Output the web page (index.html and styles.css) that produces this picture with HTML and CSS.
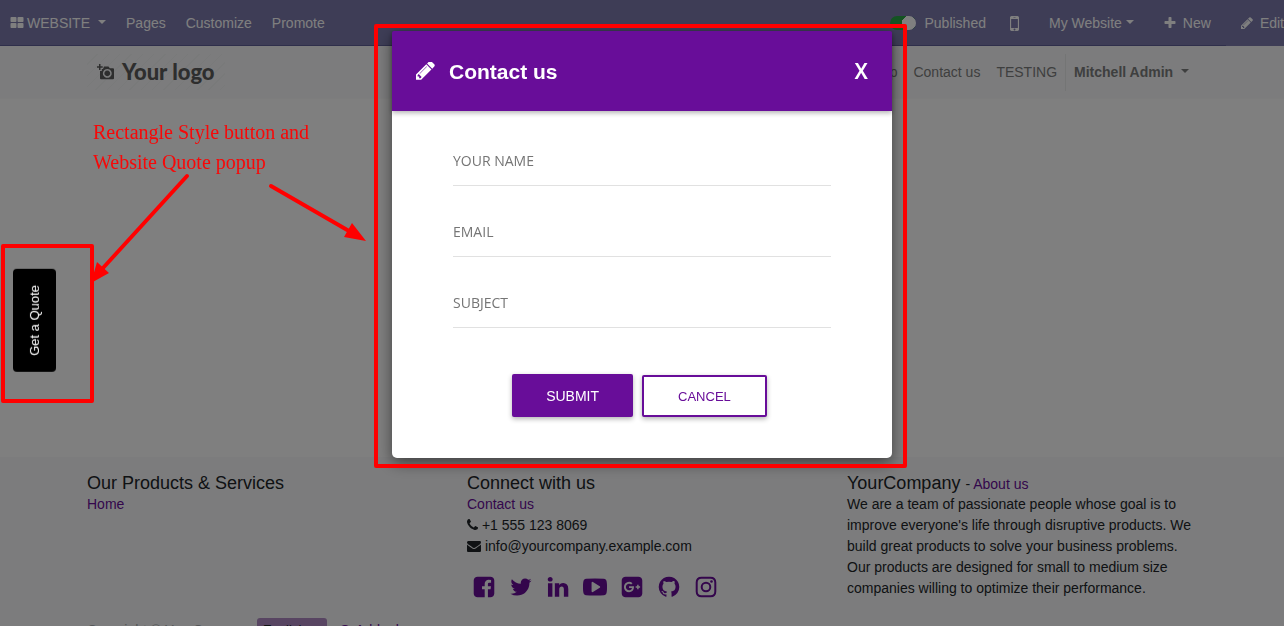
FILE: index.html
```html
<!DOCTYPE html>
<html lang="en">
<head>
    <meta charset="UTF-8">
    <meta name="viewport" content="width=device-width, initial-scale=1.0">
    <title>Contact us</title>
    <link rel="stylesheet" href="styles.css">
</head>
<body>
    <div class="page">
        <nav class="topbar">
            <a href="#" class="brand">
                <svg class="icon" viewBox="0 0 1792 1792"><path d="M832 1024v384q0 52-38 90t-90 38h-512q-52 0-90-38t-38-90v-384q0-52 38-90t90-38h512q52 0 90 38t38 90zm0-768v384q0 52-38 90t-90 38h-512q-52 0-90-38t-38-90v-384q0-52 38-90t90-38h512q52 0 90 38t38 90zm896 768v384q0 52-38 90t-90 38h-512q-52 0-90-38t-38-90v-384q0-52 38-90t90-38h512q52 0 90 38t38 90zm0-768v384q0 52-38 90t-90 38h-512q-52 0-90-38t-38-90v-384q0-52 38-90t90-38h512q52 0 90 38t38 90z"/></svg>
                WEBSITE <span class="caret"></span>
            </a>
            <a href="#">Pages</a>
            <a href="#">Customize</a>
            <a href="#">Promote</a>
            <div class="topbar-right">
                <label class="publish"><input type="checkbox" class="switch" checked> Published</label>
                <a href="#" class="mobile" aria-label="Mobile preview">
                    <svg viewBox="512 256 768 1280"><path d="M976 1408q0-33-23.500-56.500t-56.500-23.500-56.500 23.500-23.500 56.500 23.500 56.500 56.500 23.500 56.500-23.500 23.500-56.500zm208-160v-704q0-13-9.500-22.500t-22.500-9.500h-512q-13 0-22.500 9.500t-9.500 22.500v704q0 13 9.500 22.500t22.500 9.500h512q13 0 22.500-9.500t9.500-22.500zm-192-848q0-16-16-16h-160q-16 0-16 16t16 16h160q16 0 16-16zm288-16v1024q0 52-38 90t-90 38h-512q-52 0-90-38t-38-90v-1024q0-52 38-90t90-38h512q52 0 90 38t38 90z"/></svg>
                </a>
                <a href="#">My Website<span class="caret caret-tight"></span></a>
                <a href="#" class="action">
                    <svg class="icon" viewBox="0 0 1792 1792"><path d="M1600 736v192q0 40-28 68t-68 28h-416v416q0 40-28 68t-68 28h-192q-40 0-68-28t-28-68v-416h-416q-40 0-68-28t-28-68v-192q0-40 28-68t68-28h416v-416q0-40 28-68t68-28h192q40 0 68 28t28 68v416h416q40 0 68 28t28 68z"/></svg>
                    New
                </a>
                <a href="#" class="action edit">
                    <svg class="icon" viewBox="0 0 1792 1792"><path d="M491 1536l91-91-235-235-91 91v107h128v128h107zm523-928q0-22-22-22-10 0-17 7l-542 542q-7 7-7 17 0 22 22 22 10 0 17-7l542-542q7-7 7-17zm-54-192l416 416-832 832h-416v-416zm683 96q0 53-37 90l-166 166-416-416 166-165q36-38 90-38 53 0 91 38l235 234q37 39 37 91z"/></svg>
                    Edit
                </a>
            </div>
        </nav>

        <header class="site-header">
            <div class="container header-row">
                <a href="#" class="logo">
                    <svg viewBox="0 0 18 16"><path fill-rule="evenodd" d="M2 0h1.500v2.200h2.200v1.500h-2.200v2.200h-1.500v-2.200h-2v-1.500h2zM7 2.500h4.500l1.300 1.700h3.200q1 0 1 1v9q0 1-1 1h-12q-1 0-1-1v-7.200h1.800v-2h1.200zM10.300 5a4.400 4.400 0 1 0 .010 0zM10.300 6.500a2.900 2.900 0 1 1-.010 0z"/></svg>
                    <span>Your logo</span>
                </a>
                <nav class="menu">
                    <a href="#">Shop</a>
                    <a href="#">Contact us</a>
                    <a href="#">TESTING</a>
                    <a href="#" class="user">Mitchell Admin <span class="caret"></span></a>
                </nav>
            </div>
        </header>

        <main class="content"></main>

        <footer class="site-footer">
            <div class="container columns">
                <section>
                    <h5>Our Products &amp; Services</h5>
                    <a href="#">Home</a>
                </section>
                <section>
                    <h5>Connect with us</h5>
                    <a href="#">Contact us</a>
                    <p>
                        <svg class="phone" viewBox="192 0 1408 1792"><path d="M1600 1240q0 27-10 70.500t-21 68.500q-21 50-122 106-94 51-186 51-27 0-53-3.500t-57.500-12.500-47-14.500-55.500-20.500-49-18q-98-35-175-83-127-79-264-216t-216-264q-48-77-83-175-3-9-18-49t-20.500-55.500-14.500-47-12.500-57.500-3.500-53q0-92 51-186 56-101 106-122 25-11 68.500-21t70.500-10q14 0 21 3 18 6 53 76 11 19 30 54t35 63.500 31 53.500q3 4 17.500 25t21.500 35.500 7 28.500q0 20-28.500 50t-62 55-62 53-28.500 46q0 9 5 22.500t8.500 20.500 14 24 11.500 19q76 137 174 235t235 174q2 1 19 11.500t24 14 20.500 8.500 22.500 5q18 0 46-28.500t53-62 55-62 50-28.500q14 0 28.500 7t35.500 21.500 25 17.500q25 15 53.500 31t63.500 35 54 30q70 35 76 53 3 7 3 21z"/></svg>
                        +1 555 123 8069
                    </p>
                    <p>
                        <svg class="envelope" viewBox="0 0 1792 1792"><path d="M1792 710v794q0 66-47 113t-113 47h-1472q-66 0-113-47t-47-113v-794q44 49 101 87 362 246 497 345 57 42 92.500 65.500t94.500 48 110 24.500h2q51 0 110-24.500t94.500-48 92.500-65.500q170-123 498-345 57-39 100-87zm0-294q0 79-49 151t-122 123q-376 261-468 325-10 7-42.500 31t-54 38.500-52 32.500-57.500 27-50 9h-2q-23 0-50-9t-57.500-27-52-32.500-54-38.500-42.500-31q-91-64-262-182.500t-205-142.500q-62-42-117-115.500t-55-136.500q0-78 41.500-130t118.500-52h1472q65 0 112.500 47t47.500 113z"/></svg>
                        info@yourcompany.example.com
                    </p>
                    <div class="social">
                        <a href="#" aria-label="Facebook"><svg viewBox="0 0 1792 1792"><path d="M1376 128q119 0 203.500 84.500t84.500 203.500v960q0 119-84.500 203.500t-203.500 84.500h-188v-595h199l30-232h-229v-148q0-56 23.500-84t91.500-28l122-1v-207q-63-9-178-9-136 0-217.500 80t-81.500 226v171h-200v232h200v595h-532q-119 0-203.500-84.500t-84.500-203.500v-960q0-119 84.500-203.500t203.500-84.500h960z"/></svg></a>
                        <a href="#" aria-label="Twitter"><svg viewBox="0 0 1792 1792"><path d="M1684 408q-67 98-162 167 1 14 1 42 0 130-38 259.500t-115.500 248.500-184.500 210.500-258 146-323 54.500q-271 0-496-145 35 4 78 4 225 0 401-138-105-2-188-64.500t-114-159.500q33 5 61 5 43 0 85-11-112-23-185.500-111.500t-73.500-205.500v-4q68 38 146 41-66-44-105-115t-39-154q0-88 44-163 121 149 294.500 238.500t371.500 99.500q-8-38-8-74 0-134 94.500-228.500t228.500-94.500q140 0 236 102 109-21 205-78-37 115-142 178 93-10 186-50z"/></svg></a>
                        <a href="#" aria-label="LinkedIn"><svg viewBox="0 0 1792 1792"><path d="M477 625v991h-330v-991h330zm21-306q1 73-50.500 122t-135.500 49h-2q-82 0-132-49t-50-122q0-74 51.500-122.500t134.500-48.500 133 48.500 51 122.500zm1166 729v568h-329v-530q0-105-40.500-164.500t-126.500-59.500q-63 0-105.500 34.500t-63.500 85.500q-11 30-11 81v553h-329q2-399 2-647t-1-296l-1-48h329v144h-2q20-32 41-56t56.500-52 87-43.500 114.500-15.500q171 0 275 113.500t104 332.500z"/></svg></a>
                        <a href="#" aria-label="YouTube"><svg viewBox="0 0 1792 1792"><path d="M1280 896q0-37-30-54l-512-320q-31-20-65-2-33 18-33 56v640q0 38 33 56 16 8 31 8 20 0 34-10l512-320q30-17 30-54zm512 0q0 96-1 150t-8.500 136.500-22.500 147.500q-16 73-69 123t-124 58q-222 25-671 25t-671-25q-71-8-124.500-58t-69.500-123q-14-65-21.500-147.500t-8.500-136.500-1-150 1-150 8.500-136.500 22.500-147.500q16-73 69-123t124-58q222-25 671-25t671 25q71 8 124.500 58t69.500 123q14 65 21.500 147.500t8.500 136.500 1 150z"/></svg></a>
                        <a href="#" aria-label="Google Plus"><svg viewBox="0 0 1792 1792"><path d="M1045 905q0-26-6-64h-362v132h217q-3 24-16.500 50t-37.500 53-66.500 44.500-96.500 17.500q-99 0-169-71t-70-171 70-171 169-71q92 0 153 59l104-101q-108-100-257-100-160 0-272 112.500t-112 271.500 112 271.500 272 112.500q165 0 266.500-105t101.500-270zm345 46h109v-110h-109v-110h-110v110h-110v110h110v110h110v-110zm274-535v960q0 119-84.500 203.500t-203.500 84.500h-960q-119 0-203.500-84.500t-84.500-203.500v-960q0-119 84.500-203.500t203.500-84.500h960q119 0 203.500 84.500t84.500 203.500z"/></svg></a>
                        <a href="#" aria-label="GitHub"><svg viewBox="0 0 1792 1792"><path d="M896 128q209 0 385.500 103t279.500 279.500 103 385.500q0 251-146.500 451.500t-378.500 277.500q-27 5-40-7t-13-30q0-3 .5-76.500t.5-134.500q0-97-52-142 57-6 102.500-18t94-39 81-66.500 53-105 20.500-150.500q0-119-79-206 37-91-8-204-28-9-81 11t-92 44l-38 24q-93-26-192-26t-192 26q-16-11-42.500-27t-83.500-38.500-85-13.500q-45 113-8 204-79 87-79 206 0 85 20.500 150t52.500 105 80.500 67 94 39 102.500 18q-39 36-49 103-21 10-45 15t-57 5-65.500-21.500-55.500-62.500q-19-32-48.500-52t-49.500-24l-20-3q-21 0-29 4.500t-5 11.500 9 14 13 12l7 5q22 10 43.500 38t31.500 51l10 23q13 38 44 61.500t67 30 69.500 7 55.500-3.500l23-4q0 38 .5 88.500t.5 54.500q0 18-13 30t-40 7q-232-77-378.500-277.500t-146.500-451.500q0-209 103-385.500t279.500-279.500 385.500-103z"/></svg></a>
                        <a href="#" aria-label="Instagram"><svg viewBox="0 0 24 24"><path fill="none" stroke="currentColor" stroke-width="2" d="M7.500 2.700h9q4.800 0 4.800 4.800v9q0 4.800-4.800 4.800h-9q-4.800 0-4.800-4.800v-9q0-4.800 4.800-4.800z"/><circle cx="12" cy="12" r="4.300" fill="none" stroke="currentColor" stroke-width="2"/><circle cx="17.500" cy="6.500" r="1.300"/></svg></a>
                    </div>
                </section>
                <section>
                    <h5>YourCompany <small>- <a href="#">About us</a></small></h5>
                    <p>We are a team of passionate people whose goal is to improve everyone's life through disruptive products. We build great products to solve your business problems.</p>
                    <p>Our products are designed for small to medium size companies willing to optimize their performance.</p>
                </section>
            </div>
            <div class="container copyright">
                <span class="muted">Copyright © YourCompany</span>
                <button type="button" class="language">English <span class="caret"></span></button>
                <a href="#" class="add-language"><span class="plus-dot"></span>Add a language</a>
            </div>
        </footer>
    </div>

    <button type="button" class="quote-button">Get a Quote</button>

    <div class="backdrop">
        <div class="modal" role="dialog" aria-labelledby="modal-title">
            <div class="modal-header">
                <svg class="modal-icon" viewBox="128 256 1536 1408"><path d="M491 1536l91-91-235-235-91 91v107h128v128h107zm523-928q0-22-22-22-10 0-17 7l-542 542q-7 7-7 17 0 22 22 22 10 0 17-7l542-542q7-7 7-17zm-54-192l416 416-832 832h-416v-416zm683 96q0 53-37 90l-166 166-416-416 166-165q36-38 90-38 53 0 91 38l235 234q37 39 37 91z"/></svg>
                <h2 id="modal-title">Contact us</h2>
                <button type="button" class="close">X</button>
            </div>
            <form class="modal-body">
                <input type="text" placeholder="YOUR NAME" aria-label="Your name">
                <input type="email" placeholder="EMAIL" aria-label="Email">
                <input type="text" placeholder="SUBJECT" aria-label="Subject">
                <div class="buttons">
                    <button type="submit" class="submit">SUBMIT</button>
                    <button type="button" class="cancel">CANCEL</button>
                </div>
            </form>
            <div class="mark mark-modal"></div>
        </div>
    </div>

    <!-- callouts over the page -->
    <div class="mark mark-button"></div>
    <p class="note">Rectangle Style button and<br>Website Quote popup</p>
    <svg class="arrows" viewBox="0 0 380 300">
        <path class="shaft" d="M187 176L103 268M271 186L349 231"/>
        <path class="head" d="M91 283L97 262L109 273ZM366 241L352 223L344 237Z"/>
    </svg>
</body>
</html>
```
FILE: styles.css
```css
* {
    box-sizing: border-box;
}
body {
    margin: 0;
    font-family: "Liberation Sans", Arial, sans-serif;
    font-size: 14px;
    line-height: 21px;
    color: #212529;
    background-color: #fff;
}
a {
    color: #680d99;
    text-decoration: none;
}
h2, h5, p {
    margin: 0;
}
svg {
    fill: currentColor;
}
button {
    font-family: inherit;
    cursor: pointer;
}
.page {
    height: 100vh;
    overflow: hidden;
}
.container {
    max-width: 1140px;
    margin: 0 auto;
    padding: 0 15px;
}
.caret {
    display: inline-block;
    margin-left: 4px;
    vertical-align: 4px;
    border-top: 4px solid;
    border-left: 4px solid transparent;
    border-right: 4px solid transparent;
}

/* top bar */
.topbar {
    display: flex;
    height: 46px;
    background-color: #7c7bad;
    box-shadow: inset 0 -1px #5f5e97;
    white-space: nowrap;
}
.topbar a, .publish {
    display: flex;
    align-items: center;
    padding: 0 10px;
    color: #fff;
}
.topbar .icon {
    width: 14px;
    height: 14px;
    margin-right: 3px;
}
.topbar .caret {
    margin-left: 8px;
    margin-bottom: 2px;
}
.topbar .caret-tight {
    margin-left: 4px;
}
.topbar-right {
    display: flex;
    margin-left: auto;
}
.topbar .topbar-right a {
    padding: 0 15px;
}
.topbar .topbar-right .mobile {
    padding-left: 14px;
}
.mobile svg {
    width: 9px;
    height: 15px;
}
.topbar .action .icon {
    margin-right: 6px;
}
.topbar .topbar-right .action {
    padding-left: 14px;
}
.topbar .topbar-right .edit {
    padding-right: 0;
    background-color: #7c7bad;
}
.switch {
    appearance: none;
    width: 26px;
    height: 14px;
    margin: 0 8px 0 0;
    border-radius: 7px;
    background: radial-gradient(circle at 19px 7px, #fff 7px, #28a745 7px);
}

/* site header */
.site-header {
    background-color: #f8f9fa;
    border-bottom: 1px solid #fbfbfb;
}
.header-row {
    display: flex;
    justify-content: space-between;
    align-items: center;
    height: 52px;
}
.logo {
    display: flex;
    align-items: center;
    gap: 7px;
    height: 36px;
    padding: 0 10px;
    font: 900 22px/36px Lato, sans-serif;
    color: #5c5c5c;
    background: repeating-linear-gradient(135deg, transparent 0 7px, #f3f4f5 7px 8px);
}
.logo svg {
    width: 18px;
    height: 16px;
}
.menu {
    display: flex;
}
.menu a {
    padding: 8px;
    color: #7d7e7e;
}
.menu .user {
    border-left: 1px solid #e9eaeb;
    font-weight: bold;
}
.content {
    min-height: 358px;
}

/* footer */
.site-footer {
    padding-top: 16px;
    background-color: #f8f9fa;
}
.columns {
    display: grid;
    grid-template-columns: repeat(3, 1fr);
    column-gap: 30px;
}
.site-footer h5 {
    font-size: 18px;
    font-weight: normal;
}
.site-footer small {
    font-size: 14px;
    line-height: 1;
}
.phone {
    width: 11px;
    height: 14px;
    vertical-align: -2px;
}
.envelope {
    width: 14px;
    height: 14px;
    vertical-align: -2px;
}
.social {
    display: flex;
    gap: 13px;
    margin-top: 18px;
    padding-left: 5px;
}
.social svg {
    display: block;
    width: 24px;
    height: 24px;
}
.copyright {
    display: flex;
    align-items: center;
    margin-top: 19px;
}
.muted {
    color: #a8acb0;
}
.language {
    margin: 0 12px 0 4px;
    padding: 2px 6px;
    border: 0;
    border-radius: 3px;
    font-size: 13px;
    line-height: 20px;
    color: #212529;
    background-color: #b08ac4;
}
.plus-dot {
    display: inline-block;
    width: 12px;
    height: 12px;
    margin-right: 4px;
    border-radius: 50%;
    vertical-align: -2px;
    background-color: #680d99;
}

/* quote button */
.quote-button {
    position: fixed;
    z-index: 3;
    top: 269px;
    left: 13px;
    padding: 16px 14px;
    border: 0;
    border-radius: 4px;
    font-size: 13px;
    line-height: 15px;
    color: #fff;
    background-color: #000;
    writing-mode: vertical-rl;
    transform: rotate(180deg);
}

/* popup */
.backdrop {
    position: fixed;
    inset: 0;
    z-index: 2;
    padding-top: 31px;
    background-color: rgba(0, 0, 0, 0.5);
}
.modal {
    position: relative;
    max-width: 500px;
    margin: 0 auto;
    border-radius: 5px;
    background-color: #fff;
    box-shadow: 0 5px 15px rgba(0, 0, 0, 0.5);
}
.modal-header {
    display: flex;
    align-items: center;
    height: 80px;
    padding: 0 24px;
    color: #fff;
    background-color: #680d99;
    border-radius: 2px 2px 0 0;
    box-shadow: 0 2px 5px rgba(0, 0, 0, 0.3);
}
.modal-icon {
    width: 19px;
    height: 18px;
    margin-right: 14px;
}
.modal-header h2 {
    font-size: 21px;
}
.close {
    margin-left: auto;
    padding: 0;
    border: 0;
    font: 600 21px "Noto Sans", sans-serif;
    color: #fff;
    background: none;
}
.modal-body {
    padding: 25px 61px 41px;
}
.modal-body input {
    display: block;
    width: 100%;
    height: 50px;
    margin-bottom: 21px;
    padding: 0;
    border: 0;
    border-bottom: 1px solid #e1e1e1;
    font: 14px "Open Sans", sans-serif;
    outline: 0;
}
.modal-body input::placeholder {
    color: #757575;
}
.buttons {
    display: flex;
    justify-content: center;
    align-items: flex-end;
    gap: 9px;
    margin-top: 46px;
    padding-right: 5px;
}
.submit, .cancel {
    padding: 12px 34px 10px;
    border-radius: 2px;
    box-shadow: 0 2px 5px rgba(0, 0, 0, 0.3);
}
.submit {
    border: 0;
    font-size: 14px;
    line-height: 21px;
    color: #fff;
    background-color: #680d99;
}
.cancel {
    border: 2px solid #680d99;
    font-size: 13px;
    line-height: 16px;
    color: #680d99;
    background-color: #fff;
}

/* callouts */
.mark {
    position: absolute;
    z-index: 4;
    border: 4px solid #f00;
    border-radius: 2px;
    pointer-events: none;
}
.mark-modal {
    inset: -7px -15px -10px -18px;
}
.mark-button {
    top: 244px;
    left: 1px;
    width: 93px;
    height: 159px;
}
.note {
    position: absolute;
    z-index: 4;
    top: 117px;
    left: 93px;
    font: 20px/30px "Liberation Serif", serif;
    color: #f80808;
}
.arrows {
    position: absolute;
    z-index: 4;
    top: 0;
    left: 0;
    width: 380px;
    height: 300px;
    pointer-events: none;
}
.shaft {
    fill: none;
    stroke: #f00;
    stroke-width: 4;
    stroke-linecap: round;
}
.head {
    fill: #f00;
}
```
